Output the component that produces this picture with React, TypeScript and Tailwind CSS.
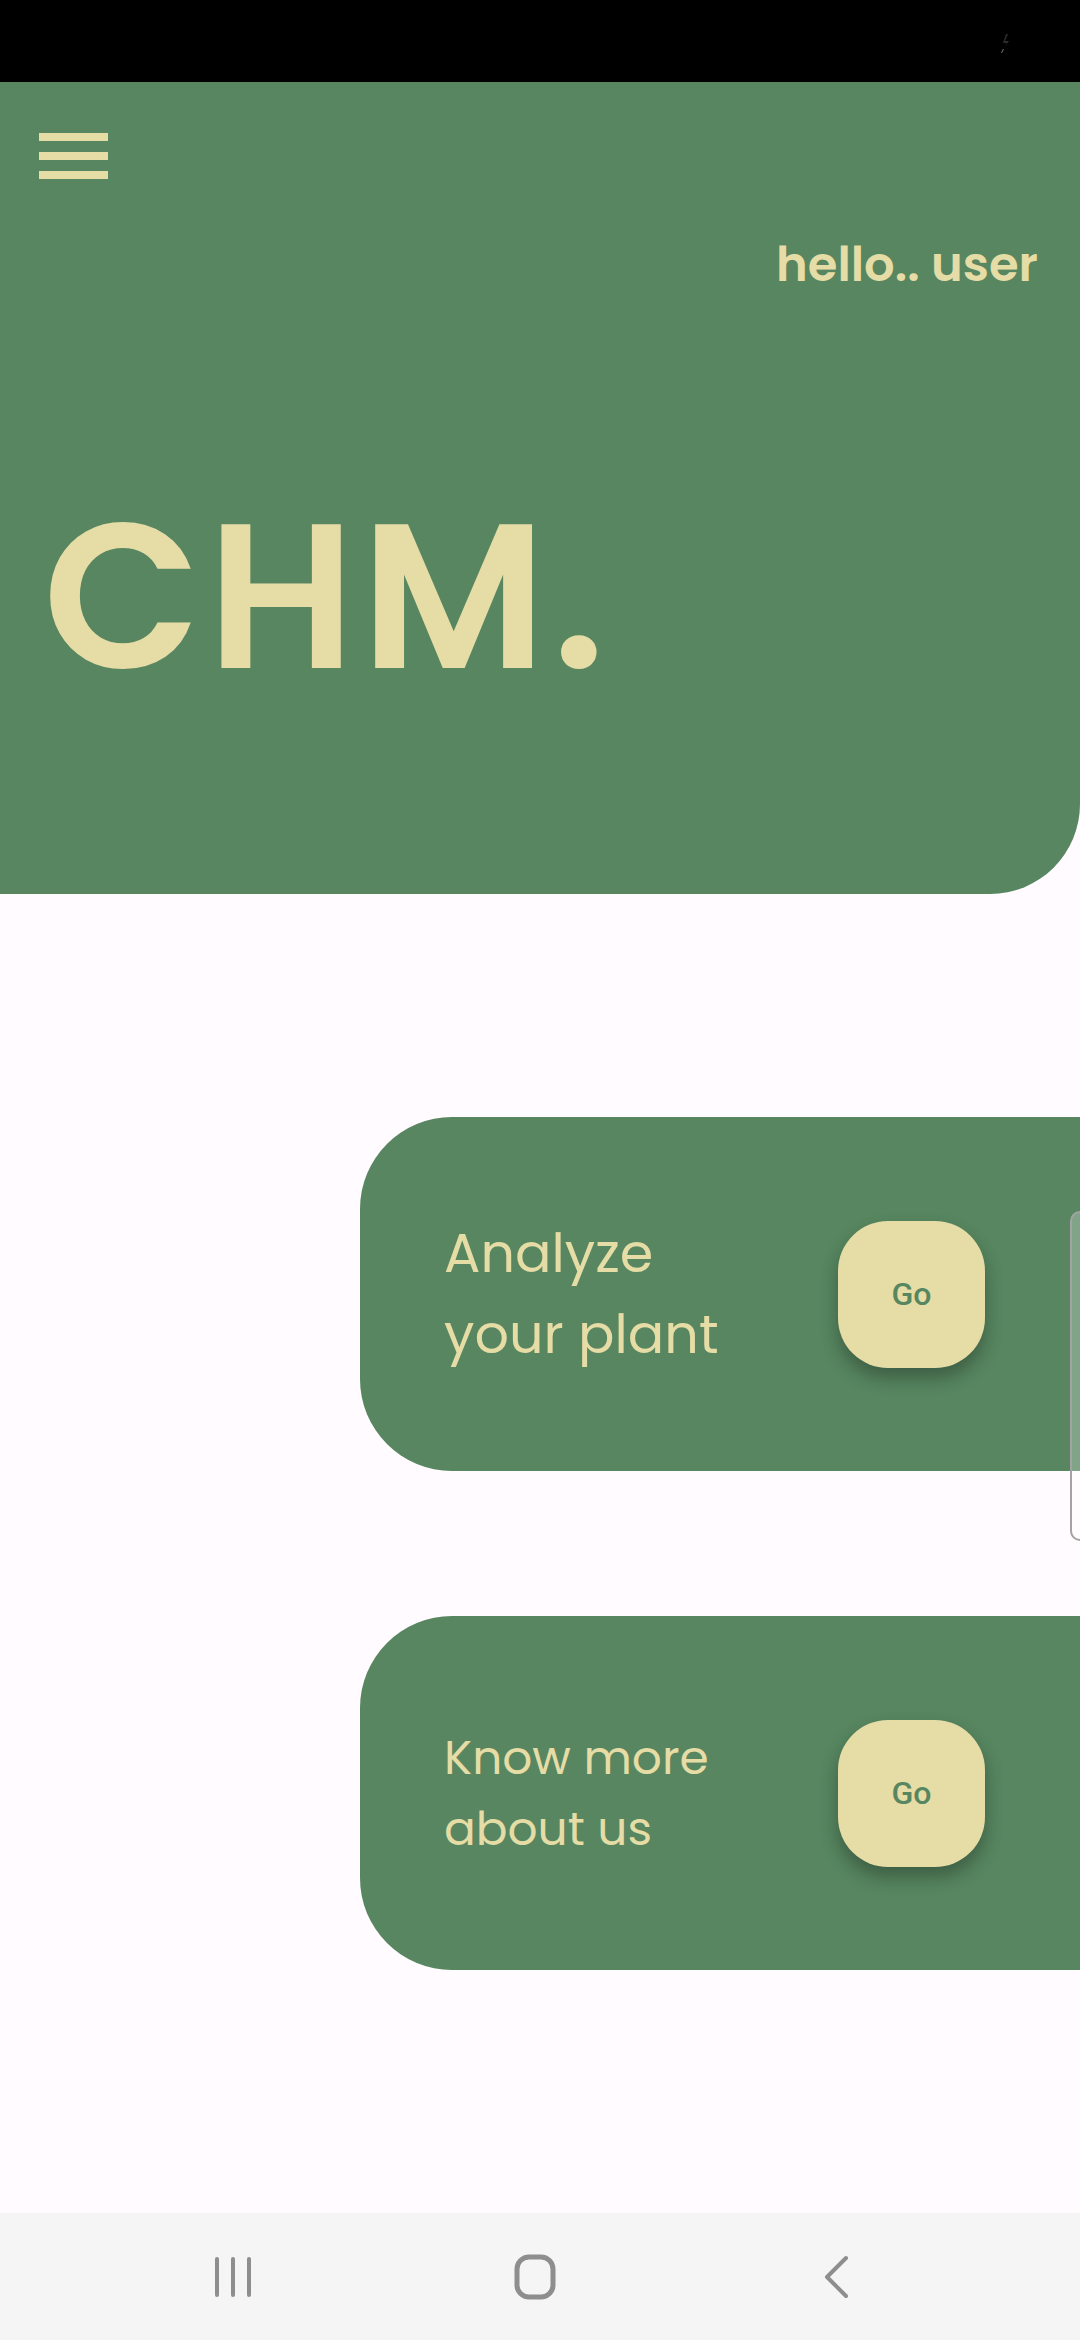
import React from "react";

const GREEN = "bg-[#578660]";

const ActionCard: React.FC<{ lines: string[]; size: "lg" | "md" }> = ({ lines, size }) => {
  const textCls =
    size === "lg" ? "text-[54px] leading-[81px]" : "text-[47px] leading-[71px]";
  return (
    <div className={`ml-[360px] h-[354px] rounded-l-[92px] ${GREEN} flex items-center`}>
      <div className={`w-[478px] pl-[84px] text-[#e5dca6] font-normal ${textCls}`}>
        {lines.map((l) => (
          <div key={l}>{l}</div>
        ))}
      </div>
      <button className="w-[147px] h-[147px] rounded-[50px] bg-[#e5dca6] shadow-[0_10px_18px_rgba(0,0,0,0.3)] flex items-center justify-center">
        <span className="text-[#578660] text-[32px] font-medium font-['Roboto',sans-serif]">Go</span>
      </button>
    </div>
  );
};

export default function App() {
  return (
    <div className="relative w-[1080px] h-[2340px] overflow-hidden bg-[#fffbfe] flex flex-col font-['Poppins','Inter',sans-serif]">
      {/* status bar */}
      <div className="h-[82px] bg-black flex justify-end items-start pr-[68px] pt-[34px]">
        <svg width="12" height="20" viewBox="0 0 12 20">
          <path d="M6 0 L3 9 L7 9 L4 14 L9 7 L5 7 L8 0 Z" fill="#2c2c2c" />
          <path d="M3 15 L1 19 L2 19 L4 15 Z" fill="#7a7a7a" />
        </svg>
      </div>

      {/* header */}
      <div className={`h-[812px] ${GREEN} rounded-br-[90px] flex flex-col`}>
        <div className="ml-[39px] mt-[51px] flex flex-col gap-[11px] w-[69px]">
          <div className="h-[8px] bg-[#e5dca6]" />
          <div className="h-[8px] bg-[#e5dca6]" />
          <div className="h-[8px] bg-[#e5dca6]" />
        </div>
        <div className="mt-[62px] self-end mr-[42px] text-[48px] leading-[48px] font-semibold text-[#e5dca6]">
          hello.. user
        </div>
        <div className="mt-[204px] ml-[43px] text-[206px] leading-[206px] font-semibold text-[#e5dca6] tracking-[6px]">
          CHM.
        </div>
      </div>

      {/* cards */}
      <div className="flex-1 flex flex-col">
        <div className="mt-[223px]">
          <ActionCard lines={["Analyze", "your plant"]} size="lg" />
        </div>
        <div className="mt-[145px]">
          <ActionCard lines={["Know more", "about us"]} size="md" />
        </div>
      </div>

      {/* partially visible side panel */}
      <div className="absolute left-[1070px] top-[1211px] w-[40px] h-[330px] rounded-[10px] border-2 border-[#a3a3a3] bg-white/25" />

      {/* nav bar */}
      <div className="h-[127px] bg-[#f5f5f5] flex items-center pl-[203px] gap-[242px]">
        <div className="w-[60px] h-[44px] flex items-center justify-center">
          <svg width="40" height="42" viewBox="0 0 40 42">
            <g stroke="#8e8e8e" strokeWidth="4" strokeLinecap="round">
              <line x1="4" y1="3" x2="4" y2="39" />
              <line x1="20" y1="3" x2="20" y2="39" />
              <line x1="36" y1="3" x2="36" y2="39" />
            </g>
          </svg>
        </div>
        <div className="w-[60px] h-[44px] flex items-center justify-center">
          <svg width="44" height="46" viewBox="0 0 44 46">
            <rect x="4" y="3" width="36" height="40" rx="12" fill="none" stroke="#8e8e8e" strokeWidth="5" />
          </svg>
        </div>
        <div className="w-[60px] h-[44px] flex items-center justify-center">
          <svg width="30" height="44" viewBox="0 0 30 44">
            <polyline points="24,3 5,22 24,41" fill="none" stroke="#8e8e8e" strokeWidth="4" strokeLinecap="round" strokeLinejoin="round" />
          </svg>
        </div>
      </div>
    </div>
  );
}
